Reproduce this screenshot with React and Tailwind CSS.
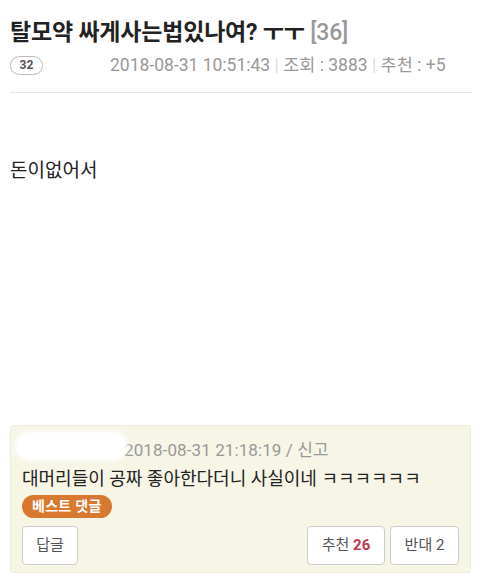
export default function App() {
  return (
    <div className="w-[498px] h-[584px] bg-white overflow-hidden" style={{ fontFamily: 'Roboto, "Noto Sans CJK KR", sans-serif' }}>
      <div className="px-[10px] pt-[18px]">
        <h1 className="text-[23px] leading-[30px] font-bold text-[#222] tracking-[-0.2px]">
          탈모약 싸게사는법있나여? ㅜㅜ <span className="text-[#999] font-medium">[36]</span>
        </h1>
        <div className="mt-[7px] flex items-center h-[20px]">
          <span className="flex h-[19px] w-[33px] items-center justify-center rounded-full border border-[#bbb] text-[12px] font-bold text-[#555]">32</span>
          <div className="w-[67px]" />
          <span className="text-[17.5px] text-[#999]">
            2018-08-31 10:51:43 <span className="text-[#ddd]">|</span> 조회 : 3883 <span className="text-[#ddd]">|</span> 추천 : +5
          </span>
        </div>
        <div className="mt-[17px] h-px w-[462px] bg-[#e6e6e6]" />
        <p className="mt-[66px] text-[19px] leading-[24px] text-[#222]">돈이없어서</p>
      </div>

      <div className="mx-[10px] mt-[242px] h-[148px] w-[461px] rounded-[3px] border border-[#ecebdc] bg-[#f7f5e6] px-[11px] pt-[4px]">
        <div className="flex items-center h-[32px]">
          <div className="-ml-[7px] mr-[-4px] h-[30px] w-[113px] rounded-full bg-white blur-[2px]" />
          <span className="mt-[10px] text-[17px] text-[#999] tracking-[0.1px]">2018-08-31 21:18:19 / 신고</span>
        </div>
        <p className="mt-[5px] text-[18px] leading-[24px] text-[#222]">대머리들이 공짜 좋아한다더니 사실이네 ㅋㅋㅋㅋㅋㅋ</p>
        <span className="mt-[4px] inline-flex h-[23px] items-center rounded-full bg-[#d9782f] px-[10px] text-[14px] font-bold text-white tracking-[0.3px]">베스트 댓글</span>
        <div className="mt-[8px] flex items-center">
          <button className="h-[39px] w-[56px] rounded-[4px] border border-[#ccc] bg-white text-[15px] text-[#555]">답글</button>
          <div className="flex-1" />
          <button className="h-[39px] w-[78px] rounded-[4px] border border-[#ccc] bg-white text-[15px] text-[#555]">
            추천 <span className="font-bold text-[#c0394a]">26</span>
          </button>
          <button className="ml-[5px] h-[39px] w-[69px] rounded-[4px] border border-[#ccc] bg-white text-[15px] text-[#555]">반대 2</button>
        </div>
      </div>
    </div>
  )
}
